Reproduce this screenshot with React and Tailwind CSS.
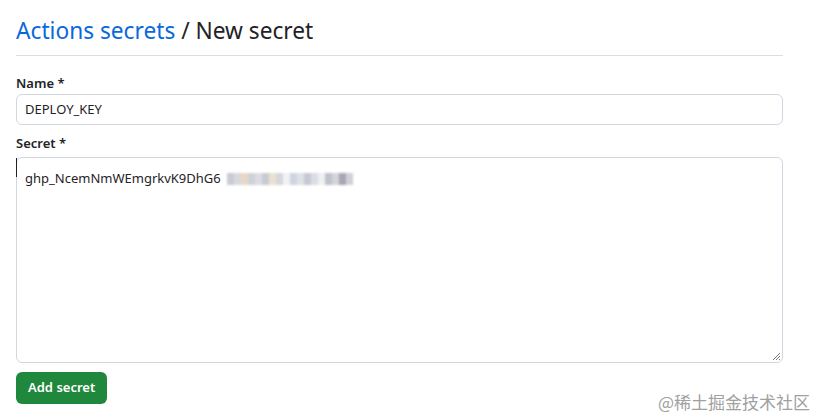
import React from "react";

const blur = [
  "#c9ccd3", "#d8d9de", "#e8d7c4", "#cfd2d8", "#dcdde2", "#c7cbd2", "#e9e2d0", "#d6d7dc",
  "#f2f2f4", "#cdd4e2", "#e0e1e6", "#c5c9d2", "#dadde3", "#f0f0f2", "#bfc2cb", "#d3d5db", "#a9a6b5", "#cfd1d8",
];

export default function App() {
  return (
    <div
      className="min-h-screen bg-white px-4 pt-[14px] text-[#1f2328]"
      style={{ fontFamily: '"Noto Sans", "Open Sans", sans-serif' }}
    >
      <div className="w-[767px]">
        <h1 className="border-b border-[#d8dee4] pb-[7px] text-[22.7px] leading-[34px] font-normal">
          <a className="text-[#0969da]">Actions secrets</a> / New secret
        </h1>

        <div className="mt-[16px]">
          <label className="block text-[13px] font-semibold leading-[22px]">Name *</label>
          <div className="flex h-[31px] items-center rounded-md border border-[#d0d7de] px-2 text-[13px]">
            DEPLOY_KEY
          </div>
        </div>

        <div className="mt-[7px]">
          <label className="mb-[3px] block text-[13px] font-semibold leading-[22px]">Secret *</label>
          <div className="relative h-[206px] rounded-md border border-[#d0d7de] px-2 pt-[11px] text-[13px]">
            <span className="absolute left-[-1px] top-0 h-[19px] w-[1px] bg-[#1f2328]" />
            <div className="flex items-center">
              <span>ghp_NcemNmWEmgrkvK9DhG6</span>
              <span className="ml-[6px] flex h-[12px] blur-[1px]">
                {blur.map((c, i) => (
                  <span key={i} className="h-full w-[7px]" style={{ background: c }} />
                ))}
              </span>
            </div>
            <svg className="absolute bottom-[1px] right-[1px]" width="10" height="10" viewBox="0 0 10 10">
              <path d="M9 2 L2 9 M9 5 L5 9 M9 8 L8 9" stroke="#777" strokeWidth="1" />
            </svg>
          </div>
        </div>

        <div className="mt-[9px] flex items-end justify-between">
          <button className="h-[32px] rounded-md bg-[#1f883d] px-3 text-[13px] font-semibold text-white">
            Add secret
          </button>
        </div>
      </div>
      <div
        className="absolute right-[7px] top-[389px] text-[17px] text-[#a0a0a0]"
        style={{ fontFamily: '"Noto Sans CJK SC", sans-serif' }}
      >
        @稀土掘金技术社区
      </div>
    </div>
  );
}
